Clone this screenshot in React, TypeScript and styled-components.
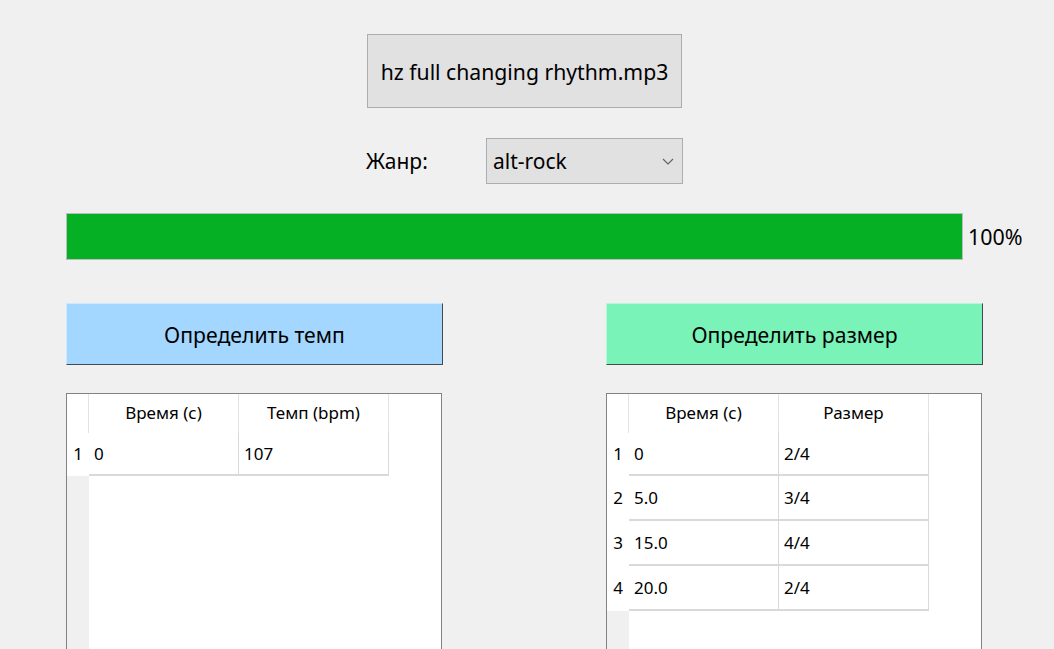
import React from "react";
import styled, { createGlobalStyle } from "styled-components";

const Global = createGlobalStyle`
  html, body { margin: 0; padding: 0; background: #f0f0f0; }
  body { font-family: "Segoe UI", "Noto Sans", "Open Sans", sans-serif; color: #000; overflow: hidden; }
`;

const Window = styled.div`
  width: 1054px;
  height: 649px;
  box-sizing: border-box;
  padding: 34px 0 0 66px;
  display: flex;
  flex-direction: column;
  overflow: hidden;
  & > * { flex-shrink: 0; }
`;

const FileButton = styled.div`
  margin-left: 301px;
  width: 315px;
  height: 74px;
  box-sizing: border-box;
  border: 1px solid #adadad;
  background: #e1e1e1;
  display: flex;
  align-items: center;
  justify-content: center;
  font-size: 21.2px;
`;

const GenreRow = styled.div`
  margin-top: 30px;
  margin-left: 300px;
  display: flex;
  align-items: center;
  height: 46px;
`;

const Label = styled.span`
  width: 120px;
  font-size: 21px;
`;

const Combo = styled.div`
  width: 197px;
  height: 46px;
  box-sizing: border-box;
  border: 1px solid #adadad;
  background: #e1e1e1;
  display: flex;
  align-items: center;
  justify-content: space-between;
  padding: 0 8px 0 6px;
  font-size: 21px;
`;

const ProgressRow = styled.div`
  margin-top: 29px;
  display: flex;
  align-items: center;
  gap: 5px;
`;

const ProgressTrack = styled.div`
  width: 897px;
  height: 47px;
  box-sizing: border-box;
  border: 1px solid #bcbcbc;
  background: #e6e6e6;
  display: flex;
`;

const ProgressFill = styled.div`
  background: #06b025;
  height: 100%;
`;

const Percent = styled.span`
  font-size: 21.4px;
`;

const Columns = styled.div`
  margin-top: 43px;
  display: flex;
  gap: 163px;
`;

const Column = styled.div`
  width: 377px;
  display: flex;
  flex-direction: column;
  gap: 28px;
  & > * { flex-shrink: 0; }
`;

const ActionButton = styled.div<{ $bg: string }>`
  width: 377px;
  height: 62px;
  box-sizing: border-box;
  background: ${(p) => p.$bg};
  border-top: 1px solid rgba(255, 255, 255, 0.45);
  border-left: 1px solid rgba(255, 255, 255, 0.45);
  border-right: 1px solid #434b52;
  border-bottom: 1px solid #434b52;
  display: flex;
  align-items: center;
  justify-content: center;
  font-size: 21.2px;
`;

const TableFrame = styled.div`
  width: 376px;
  height: 280px;
  box-sizing: border-box;
  border: 1px solid #828282;
  background: #fff;
  display: flex;
`;

const VHeader = styled.div`
  width: 22px;
  background: #f0f0f0;
  display: flex;
  flex-direction: column;
`;

const Corner = styled.div`
  height: 39px;
  background: #fff;
  border-right: 1px solid #e3e3e3;
`;

const RowNum = styled.div<{ $h: number }>`
  height: ${(p) => p.$h}px;
  background: #fff;
  display: flex;
  align-items: center;
  justify-content: center;
  font-size: 17px;
  padding-bottom: 2px;
  box-sizing: border-box;
`;

const Grid = styled.div`
  display: grid;
  grid-template-columns: 150px 150px;
  align-content: start;
`;

const HeadCell = styled.div`
  height: 39px;
  box-sizing: border-box;
  border-right: 1px solid #e3e3e3;
  display: flex;
  align-items: center;
  justify-content: center;
  font-size: 17px;
  padding-bottom: 2px;
`;

const Cell = styled.div<{ $h: number }>`
  height: ${(p) => p.$h}px;
  box-sizing: border-box;
  border-right: 1px solid #d9d9d9;
  border-bottom: 2px solid #d9d9d9;
  display: flex;
  align-items: center;
  padding-left: 5px;
  font-size: 17px;
`;

const Chevron = () => (
  <svg width="12" height="7" viewBox="0 0 12 7">
    <path d="M1 1 L6 6 L11 1" fill="none" stroke="#606060" strokeWidth="1.1" />
  </svg>
);

type TableProps = { headers: string[]; rows: string[][] };

const DataTable = ({ headers, rows }: TableProps) => {
  const heights = rows.map((_, i) => (i === 0 ? 43 : 45));
  return (
    <TableFrame>
      <VHeader>
        <Corner />
        {rows.map((_, i) => (
          <RowNum key={i} $h={heights[i]}>
            {i + 1}
          </RowNum>
        ))}
      </VHeader>
      <Grid>
        {headers.map((h) => (
          <HeadCell key={h}>{h}</HeadCell>
        ))}
        {rows.map((r, i) =>
          r.map((c, j) => (
            <Cell key={`${i}-${j}`} $h={heights[i]}>
              {c}
            </Cell>
          ))
        )}
      </Grid>
    </TableFrame>
  );
};

export default function App() {
  return (
    <>
      <Global />
      <Window>
        <FileButton>hz full changing rhythm.mp3</FileButton>
        <GenreRow>
          <Label>Жанр:</Label>
          <Combo>
            <span>alt-rock</span>
            <Chevron />
          </Combo>
        </GenreRow>
        <ProgressRow>
          <ProgressTrack>
            <ProgressFill style={{ width: "100%" }} />
          </ProgressTrack>
          <Percent>100%</Percent>
        </ProgressRow>
        <Columns>
          <Column>
            <ActionButton $bg="#a3d7ff">Определить темп</ActionButton>
            <DataTable headers={["Время (с)", "Темп (bpm)"]} rows={[["0", "107"]]} />
          </Column>
          <Column>
            <ActionButton $bg="#79f3b8">Определить размер</ActionButton>
            <DataTable
              headers={["Время (с)", "Размер"]}
              rows={[
                ["0", "2/4"],
                ["5.0", "3/4"],
                ["15.0", "4/4"],
                ["20.0", "2/4"],
              ]}
            />
          </Column>
        </Columns>
      </Window>
    </>
  );
}
